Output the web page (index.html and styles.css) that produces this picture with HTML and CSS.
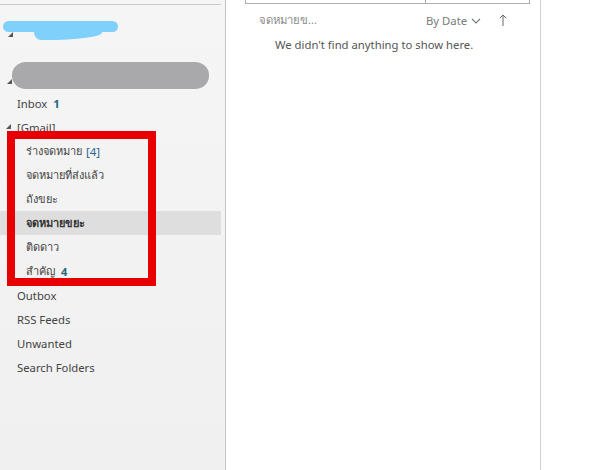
FILE: index.html
```html
<!DOCTYPE html>
<html>
<head>
<meta charset="utf-8">
<link rel="stylesheet" href="styles.css">
</head>
<body>
<div class="app">
  <aside class="nav">
    <div class="topline"></div>
    <div class="acct1"><span class="tri tri1"></span><span class="blot blue"></span><span class="blot blue2"></span></div>
    <div class="acct2"><span class="tri tri2"></span><span class="blot gray"></span></div>
    <ul class="folders">
      <li class="row"><span class="name">Inbox</span><span class="count">1</span></li>
      <li class="row grp"><span class="tri tri3"></span><span class="name">[Gmail]</span></li>
      <li class="row sub"><span class="name">ร่างจดหมาย</span><span class="draft">[4]</span></li>
      <li class="row sub"><span class="name">จดหมายที่ส่งแล้ว</span></li>
      <li class="row sub"><span class="name">ถังขยะ</span></li>
      <li class="row sub sel"><span class="name">จดหมายขยะ</span></li>
      <li class="row sub"><span class="name">ติดดาว</span></li>
      <li class="row sub"><span class="name">สำคัญ</span><span class="count">4</span></li>
      <li class="row"><span class="name">Outbox</span></li>
      <li class="row"><span class="name">RSS Feeds</span></li>
      <li class="row"><span class="name">Unwanted</span></li>
      <li class="row"><span class="name">Search Folders</span></li>
    </ul>
    <div class="redbox"></div>
  </aside>
  <main class="list">
    <div class="search"><div class="search-l"></div><div class="search-r"></div></div>
    <div class="listhead">
      <span class="fname">จดหมายข...</span>
      <span class="sort">By Date <svg class="chev" width="10" height="6" viewBox="0 0 10 6"><path d="M1 1 L5 5 L9 1" fill="none" stroke="#777" stroke-width="1.1"/></svg></span>
      <svg class="arrow" width="8" height="12" viewBox="0 0 8 12"><path d="M4 12 V1 M0.8 4.2 L4 1 L7.2 4.2" fill="none" stroke="#666" stroke-width="1"/></svg>
    </div>
    <p class="empty">We didn't find anything to show here.</p>
  </main>
  <section class="reading"></section>
</div>
</body>
</html>
```
FILE: styles.css
```css
html, body {
  margin: 0;
  padding: 0;
  background: #fff;
}
body {
  font-family: "Noto Sans", "Open Sans", sans-serif;
  font-size: 11.3px;
  color: #444;
}
.app {
  display: flex;
  width: 612px;
  height: 470px;
  overflow: hidden;
}
.nav {
  position: relative;
  width: 225px;
  flex: none;
  background: linear-gradient(#f5f5f5, #f0f0f0);
  border-right: 1px solid #c4c4c4;
  padding-top: 4px;
  box-sizing: content-box;
}
.topline {
  height: 1px;
  width: 221px;
  background: #cbcbcb;
}
.acct1 {
  position: relative;
  height: 41px;
}
.acct2 {
  position: relative;
  height: 45px;
}
.tri {
  position: absolute;
  width: 0;
  height: 0;
  border-left: 5px solid transparent;
  border-bottom: 5px solid #555;
}
.tri1 { left: 8px; top: 27px; }
.tri2 { left: 7px; top: 74px; top: 33px; }
.blot {
  position: absolute;
}
.blue {
  left: 3px;
  top: 16px;
  width: 115px;
  height: 11px;
  background: #80d0fc;
  border-radius: 6px;
}
.blue2 {
  left: 34px;
  top: 22px;
  width: 68px;
  height: 13px;
  background: #80d0fc;
  border-radius: 3px 30px 60px 8px / 3px 6px 8px 8px;
}
.gray {
  left: 12px;
  top: 16px;
  width: 197px;
  height: 27px;
  background: #a9a9ab;
  border-radius: 14px / 13px;
}
.folders {
  list-style: none;
  margin: 0;
  padding: 0;
}
.row {
  position: relative;
  display: flex;
  align-items: center;
  gap: 6px;
  height: 24px;
  width: 221px;
  padding-left: 17px;
  box-sizing: border-box;
  white-space: nowrap;
}
.row.sub {
  padding-left: 26px;
  font-size: 11px;
}
.row.sel {
  background: #dedede;
  font-weight: bold;
  color: #333;
}
.tri3 { left: 6px; top: 9px; }
.count {
  color: #22677f;
  font-weight: bold;
}
.draft {
  color: #2a6390;
  margin-left: -2px;
  font-size: 11.5px;
}
.redbox {
  position: absolute;
  left: 7px;
  top: 131px;
  width: 149px;
  height: 155px;
  border: 8px solid #e80000;
  box-sizing: border-box;
}
.list {
  width: 314px;
  flex: none;
  border-right: 1px solid #d0d0d0;
  background: #fff;
}
.search {
  display: flex;
  margin-left: 19px;
  width: 283px;
  height: 3px;
  border: 1px solid #adadad;
  border-top: none;
}
.search-l {
  width: 179px;
  border-right: 1px solid #adadad;
}
.listhead {
  display: flex;
  align-items: center;
  height: 24px;
  margin-top: 4px;
  padding-left: 33px;
  color: #8a8a8a;
}
.fname {
  width: 167px;
}
.sort {
  color: #7a7a7a;
  display: flex;
  align-items: center;
  gap: 4px;
}
.chev { margin-top: 1px; }
.arrow { margin-left: 18px; }
.empty {
  margin: 5px 0 0 49px;
  color: #555;
}
.reading {
  flex: 1;
  background: #fff;
}
```
